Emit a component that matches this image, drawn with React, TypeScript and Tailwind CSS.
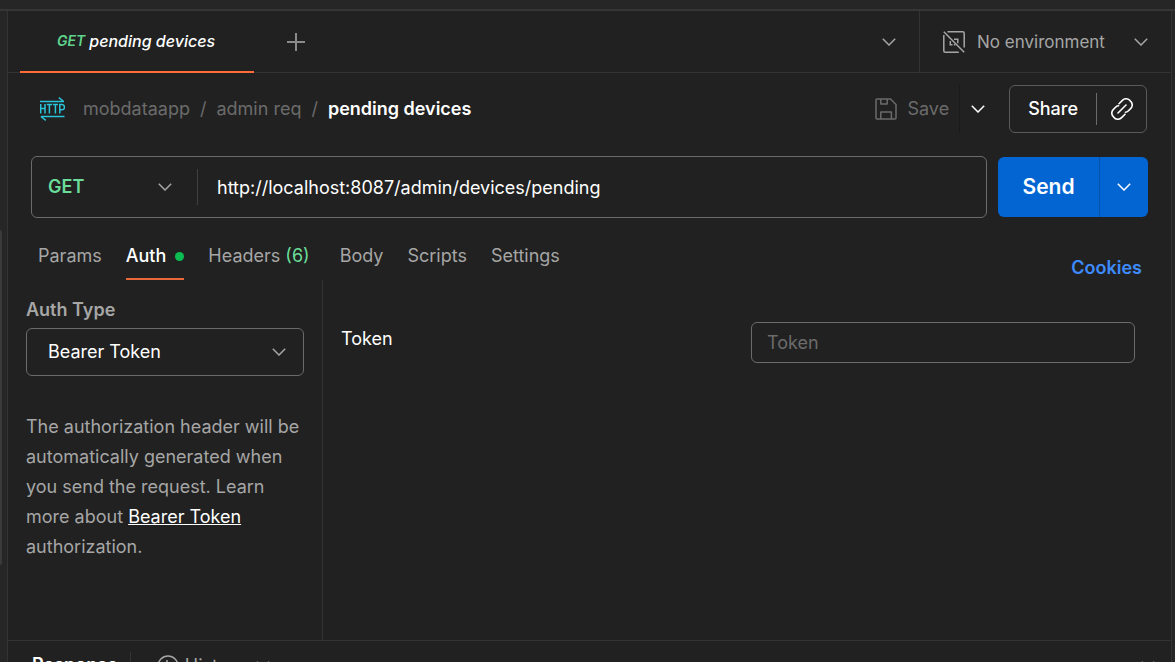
import type { ReactNode } from "react";

function Chevron({ className = "" }: { className?: string }) {
  return (
    <svg viewBox="0 0 14 8" fill="none" stroke="currentColor" strokeWidth="1.5" aria-hidden="true" className={`h-2 w-3.5 shrink-0 ${className}`}>
      <path d="M0.8 0.8 7 7l6.2-6.2" />
    </svg>
  );
}

function HttpIcon() {
  return (
    <svg viewBox="0 0 25 24" fill="none" stroke="#29c4d9" strokeWidth="1.4" aria-hidden="true" className="h-6 w-[25px] shrink-0">
      <path d="M0 4.5h24M18.8 0.6l5 3.9M24.5 19.5H1M5.8 23.4l-5-3.9" />
      <path d="M0.7 7v9.6M5 7v9.6M0.7 11.6H5M6.8 7.6h5.2M9.4 7.6v9M12.8 7.6H18M15.4 7.6v9M19.8 16.6V7.6h2.1a2.3 2.3 0 0 1 0 5.2h-2.1" strokeWidth="1.5" />
    </svg>
  );
}

function NoEnvironmentIcon() {
  return (
    <svg viewBox="0 0 22 22" fill="none" stroke="currentColor" strokeWidth="1.5" aria-hidden="true" className="size-[22px] shrink-0">
      <path d="M0.8 0.8 21.2 21.2M4.4 0.8h15.3q1.5 0 1.5 1.5v14.3M0.8 4v15.7q0 1.5 1.5 1.5h13.5" />
      <path d="M11 8.3h3.8v4M7.3 10v3.8h2.2M10.8 13.8h1.6" />
    </svg>
  );
}

function SaveIcon() {
  return (
    <svg viewBox="0 0 22 22" fill="none" stroke="currentColor" strokeWidth="1.5" strokeLinejoin="round" aria-hidden="true" className="size-[22px] shrink-0">
      <path d="M1 2q0-1 1-1h13.5L21 6.5V20q0 1-1 1H2q-1 0-1-1z" />
      <path d="M5.8 1v5h6.4V1M5.8 21v-7h10.6v7" />
    </svg>
  );
}

function LinkIcon() {
  return (
    <svg viewBox="0 0 22 22" fill="none" stroke="currentColor" strokeWidth="1.6" strokeLinecap="round" aria-hidden="true" className="size-[22px]">
      <path d="M7 15 15 7" />
      <path d="M8 5.8l3.4-3.4a5.1 5.1 0 0 1 7.8 0.4a5.1 5.1 0 0 1 0.4 7.8l-2.4 2.4q-1.2 1.2-2.8 1.2" />
      <path d="M14 16.2l-3.4 3.4a5.1 5.1 0 0 1-7.8-0.4a5.1 5.1 0 0 1-0.4-7.8l2.4-2.4q1.2-1.2 2.8-1.2" />
    </svg>
  );
}

function ClockIcon() {
  return (
    <svg viewBox="0 0 22 22" fill="none" stroke="currentColor" strokeWidth="1.5" aria-hidden="true" className="size-[22px]">
      <circle cx="11" cy="11" r="10" />
      <path d="M10 5v7h5" />
    </svg>
  );
}

function Dropdown({ label, id, className, chevronClassName, children }: { label: string; id: string; className: string; chevronClassName: string; children: ReactNode }) {
  return (
    <div className="grid h-full w-full items-center">
      <select id={id} aria-label={label} className={`col-start-1 row-start-1 h-full w-full appearance-none bg-transparent outline-none ${className}`}>
        {children}
      </select>
      <Chevron className={`pointer-events-none col-start-1 row-start-1 justify-self-end text-[#a6a6a6] ${chevronClassName}`} />
    </div>
  );
}

function TabBar() {
  return (
    <div className="flex h-[62px] shrink-0 border-b border-[#333]">
      <div className="flex flex-1 pl-3">
        <button className="-mb-px flex w-[234px] items-center gap-1 border-b-2 border-[#ff6c37] pl-[37px] text-white italic">
          <span className="text-sm font-semibold text-[#5fd38d]">GET</span>
          <span className="text-base font-medium">pending devices</span>
        </button>
        <button aria-label="New tab" className="ml-[33px] text-[#8a8a8a]">
          <svg viewBox="0 0 18 18" stroke="currentColor" strokeWidth="2" aria-hidden="true" className="size-[18px]">
            <path d="M0 9h18M9 0v18" />
          </svg>
        </button>
        <button aria-label="List tabs" className="mr-[23px] ml-auto text-[#a6a6a6]">
          <Chevron />
        </button>
      </div>
      <button className="flex w-[252px] items-center border-l border-[#333] px-[23px] text-[#a6a6a6]">
        <NoEnvironmentIcon />
        <span className="ml-3 text-[17px]">No environment</span>
        <Chevron className="ml-auto" />
      </button>
    </div>
  );
}

function Breadcrumbs() {
  return (
    <div className="flex h-12 items-center pr-6 pl-8">
      <HttpIcon />
      <nav aria-label="Breadcrumb" className="ml-[18px] flex gap-2.5 text-[#6b6b6b]">
        <a href="#mobdataapp">mobdataapp</a>
        <span>/</span>
        <a href="#admin-req">admin req</a>
        <span>/</span>
        <span className="font-semibold text-white">pending devices</span>
      </nav>
      <div className="ml-auto flex h-full items-stretch">
        <button className="flex items-center gap-2.5 pr-2.5 text-[#6b6b6b]">
          <SaveIcon />
          Save
        </button>
        <button aria-label="Save options" className="border-l border-[#1a1a1a] pr-6 pl-[11px] text-white">
          <Chevron />
        </button>
        <div className="flex items-center rounded-md border border-[#5a5a5a] text-white">
          <button className="h-full px-[18px] font-medium">Share</button>
          <button aria-label="Copy link" className="flex h-8 w-[50px] items-center justify-center border-l border-[#6b6b6b]">
            <LinkIcon />
          </button>
        </div>
      </div>
    </div>
  );
}

function RequestLine() {
  return (
    <div className="mt-[23px] flex items-center gap-[11px] px-[23px]">
      <div className="flex h-[62px] flex-1 items-center rounded-md border border-[#6b6b6b]">
        <div className="h-9 w-[166px] border-r border-[#404040]">
          <Dropdown id="method" label="Method" className="pl-4 font-semibold text-[#6bdd9a]" chevronClassName="mr-[25px]">
            <option>GET</option>
            <option>POST</option>
          </Dropdown>
        </div>
        <input aria-label="Request URL" defaultValue="http://localhost:8087/admin/devices/pending" className="h-full min-w-0 flex-1 bg-transparent px-[19px] text-white outline-none" />
      </div>
      <div className="flex h-[60px] overflow-hidden rounded-md bg-[#0265d2] text-white">
        <button className="w-[101px] text-[21px] font-semibold">Send</button>
        <button aria-label="Send options" className="flex w-[49px] items-center justify-center border-l border-[#0252ab]">
          <Chevron />
        </button>
      </div>
    </div>
  );
}

function RequestTabs() {
  return (
    <div className="flex h-[62px] pr-[29px] pl-[30px]">
      <div role="tablist" className="flex items-stretch gap-6 pt-3.5 text-[#a6a6a6]">
        <button role="tab">Params</button>
        <button role="tab" aria-selected="true" className="flex items-center gap-[9px] border-y-2 border-t-transparent border-b-[#e8683a] font-medium text-white">
          Auth
          <span className="size-[9px] rounded-full bg-[#0cbb52]" />
        </button>
        <button role="tab">
          Headers <span className="text-[#6bdd9a]">(6)</span>
        </button>
        <button role="tab" className="ml-1.5">Body</button>
        <button role="tab">Scripts</button>
        <button role="tab">Settings</button>
      </div>
      <a href="#cookies" className="mt-[37px] ml-auto font-semibold text-[#3d8bfd]">Cookies</a>
    </div>
  );
}

function AuthPanel() {
  return (
    <div className="flex min-h-0 flex-1">
      <div className="w-[315px] border-r border-[#333] px-[18px] pt-[17px] text-[#a6a6a6]">
        <label htmlFor="auth-type" className="block font-semibold">Auth Type</label>
        <div className="mt-[5px] h-12 rounded-md border border-[#6b6b6b]">
          <Dropdown id="auth-type" label="Auth Type" className="pl-[21px] text-white" chevronClassName="mr-[17px]">
            <option>Bearer Token</option>
            <option>No Auth</option>
          </Dropdown>
        </div>
        <p className="mt-9 leading-[30px]">
          The authorization header will be automatically generated when you send the request. Learn more about{" "}
          <a href="#bearer-token" className="text-white underline">Bearer Token</a> authorization.
        </p>
      </div>
      <div className="flex flex-1 items-start justify-between pt-[42px] pr-9 pl-[18px]">
        <label htmlFor="token" className="mt-1 text-white">Token</label>
        <input id="token" placeholder="Token" className="h-[41px] w-96 rounded-md border border-[#6b6b6b] bg-transparent px-[15px] text-white outline-none placeholder:text-[#6b6b6b]" />
      </div>
    </div>
  );
}

function ResponseBar() {
  return (
    <div className="h-[22px] shrink-0 overflow-hidden border-t border-[#333]">
      <div className="flex items-start pt-[11px] pr-4 pl-6">
        <h2 className="font-semibold text-white">Response</h2>
        <button className="ml-3 flex items-center border-l border-[#333] pl-[26px] text-[#a6a6a6]">
          <ClockIcon />
          <span className="ml-1.5 leading-7">History</span>
          <Chevron className="mb-0.5 ml-2.5" />
        </button>
        <button aria-label="Expand response" className="ml-auto flex h-[26px] items-center text-[#a6a6a6]">
          <Chevron />
        </button>
      </div>
    </div>
  );
}

export default function App() {
  return (
    <div className="flex h-screen flex-col overflow-hidden bg-[#262626] font-[Inter,sans-serif] text-lg leading-[26px]">
      <div className="h-[11px] shrink-0 border-b-2 border-[#363636]" />
      <div className="flex min-h-0 flex-1">
        <div className="w-[7px] shrink-0 pt-[219px]">
          <div className="h-[335px] w-0.5 rounded-r bg-[#3a3a3a]" />
        </div>
        <main className="flex min-w-0 flex-1 flex-col border-x border-[#333] bg-[#212121]">
          <TabBar />
          <div className="pt-3">
            <Breadcrumbs />
            <RequestLine />
            <RequestTabs />
          </div>
          <AuthPanel />
          <ResponseBar />
        </main>
        <div className="w-[3px] shrink-0" />
      </div>
    </div>
  );
}
